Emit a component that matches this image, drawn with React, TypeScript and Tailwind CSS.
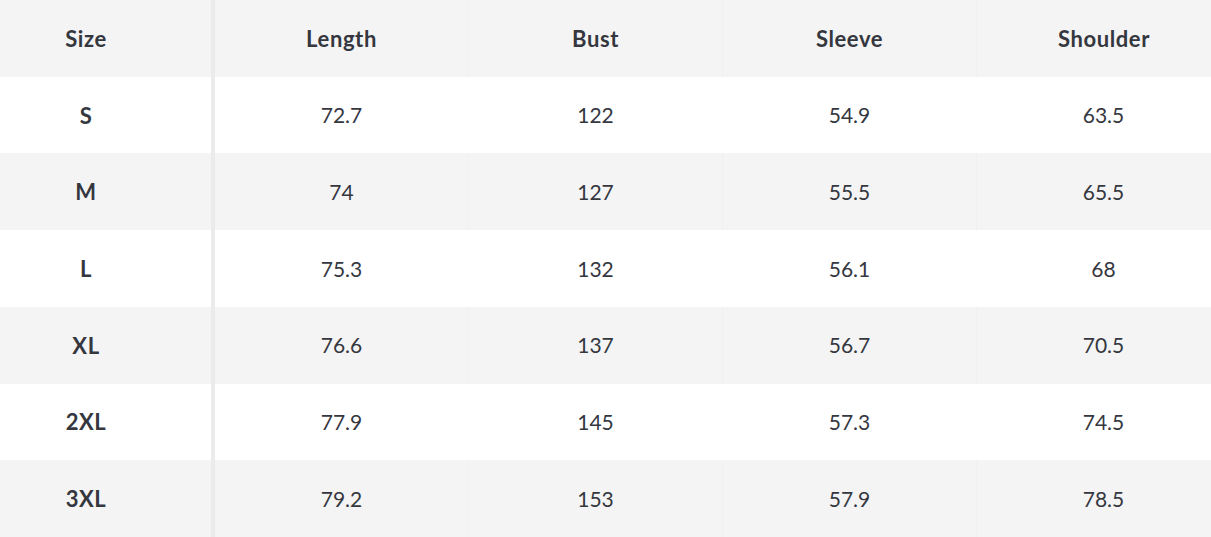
const headers = ["Length", "Bust", "Sleeve", "Shoulder"];

const rows: [string, string, string, string, string][] = [
  ["S", "72.7", "122", "54.9", "63.5"],
  ["M", "74", "127", "55.5", "65.5"],
  ["L", "75.3", "132", "56.1", "68"],
  ["XL", "76.6", "137", "56.7", "70.5"],
  ["2XL", "77.9", "145", "57.3", "74.5"],
  ["3XL", "79.2", "153", "57.9", "78.5"],
];

export default function App() {
  return (
    <div
      className="w-[1211px] h-[537px] overflow-hidden bg-white text-[#35373f]"
      style={{ fontFamily: "Lato, 'Open Sans', sans-serif" }}
    >
      <div className="grid grid-rows-7 h-full w-[1232px]">
        {/* header */}
        <div className="flex bg-[#f4f4f4] text-[22px] font-bold tracking-[0.6px]">
          <div className="w-[215px] shrink-0 flex items-center border-r-4 border-[#ebebeb]">
            <span className="w-[172px] text-center">Size</span>
          </div>
          {headers.map((h) => (
            <div key={h} className="w-[254px] shrink-0 flex items-center justify-center border-r border-[#f0f0f0] last:border-r-0">
              {h}
            </div>
          ))}
        </div>

        {rows.map((r, i) => (
          <div key={r[0]} className={`flex text-[21px] ${i % 2 === 1 ? "bg-[#f4f4f4]" : "bg-white"}`}>
            <div className="w-[215px] shrink-0 flex items-center border-r-4 border-[#ebebeb]">
              <span className="w-[172px] text-center font-bold text-[22px] tracking-[0.6px]">{r[0]}</span>
            </div>
            {r.slice(1).map((v, j) => (
              <div
                key={j}
                className={`w-[254px] shrink-0 flex items-center justify-center ${i % 2 === 1 ? "border-r border-[#f0f0f0]" : "border-r border-white"}`}
              >
                {v}
              </div>
            ))}
          </div>
        ))}
      </div>
    </div>
  );
}
